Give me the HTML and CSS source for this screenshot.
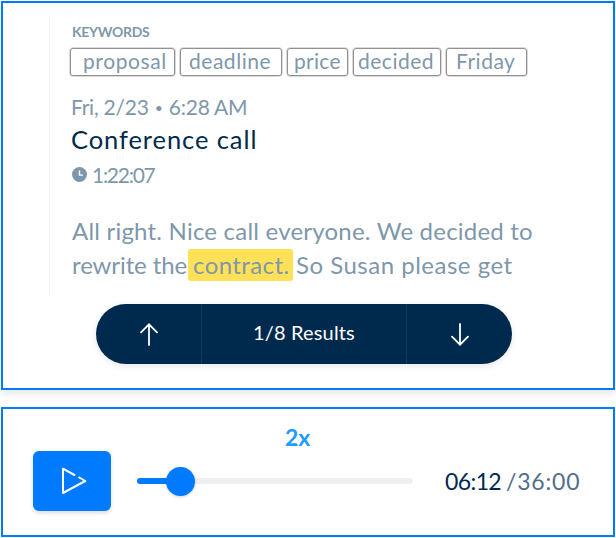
FILE: index.html
```
<!DOCTYPE html>
<html lang="en">
<head>
<meta charset="utf-8">
<title>Conference call</title>
<link rel="stylesheet" href="styles.css">
</head>
<body>
<main class="page">
  <section class="card transcript">
    <div class="entry">
      <h2 class="label">KEYWORDS</h2>
      <div class="tags">
        <span class="tag proposal">proposal</span>
        <span class="tag deadline">deadline</span>
        <span class="tag price">price</span>
        <span class="tag decided">decided</span>
        <span class="tag friday">Friday</span>
      </div>
      <p class="date">Fri, 2/23 <span class="dot">•</span> 6:28 AM</p>
      <h1 class="title">Conference call</h1>
      <p class="duration">
        <svg class="clock" viewBox="0 0 15 15"><circle cx="7.5" cy="7.5" r="7.5" fill="#7f97ab"/><path d="M7.5 3.5v4.6h3.4" fill="none" stroke="#fff" stroke-width="1.4"/></svg>
        <span>1:22:07</span>
      </p>
      <div class="speech">
        <p class="line first">All right. Nice call everyone. We decided to</p>
        <p class="line"><span class="before">rewrite the</span><mark class="hit">contract.</mark><span class="after">So Susan please get</span></p>
      </div>
    </div>
    <nav class="results">
      <button class="step" aria-label="Previous"><svg class="arrow" viewBox="0 0 18 23"><path d="M9 22V1.5M1 9.3L9 1.3L17 9.3"/></svg></button>
      <span class="count">1/8 Results</span>
      <button class="step" aria-label="Next"><svg class="arrow" viewBox="0 0 18 23"><path d="M9 1V21.5M1 13.7L9 21.7L17 13.7"/></svg></button>
    </nav>
  </section>
  <section class="card player">
    <div class="speed">2x</div>
    <div class="controls">
      <button class="play" aria-label="Play"><svg class="play-icon" viewBox="0 0 26 28"><path d="M13.4 8L2 1.7V26L24.3 14L18.2 10.5"/></svg></button>
      <div class="track"><div class="played"></div><div class="knob"></div></div>
      <div class="time"><span class="now">06:12</span><span class="total">/36:00</span></div>
    </div>
  </section>
</main>
</body>
</html>
```
FILE: styles.css
```
* { box-sizing: border-box; }
body { margin: 0; background: #fff; font-family: Lato, "Liberation Sans", sans-serif; color: #7f97ab; }
h1, h2, p { margin: 0; font-weight: 400; }
button { border: 0; padding: 0; background: none; display: flex; align-items: center; justify-content: center; }
span, mark, p, h1, h2 { white-space: nowrap; }

.page { width: 616px; height: 538px; padding: 1px; display: flex; flex-direction: column; gap: 17px; overflow: hidden; }
.card { border: 2px solid #007aff; background: #fff; }

.transcript { height: 389px; padding: 14px 0 0 46px; box-shadow: 0 4px 7px rgba(20, 30, 50, .1); }
.entry { height: 278px; border-left: 1px solid #f2f3f4; padding: 6px 0 0 20px; }
.label { font-size: 14px; line-height: 18px; font-weight: 700; letter-spacing: -.3px; margin-left: 2px; }
.tags { display: flex; margin-top: 7px; height: 28px; gap: 5px; font-size: 21px; }
.tag { height: 28px; border: 1px solid #929292; box-shadow: 0 0 0 .5px #b5b5b5; border-radius: 3px; line-height: 24px; }
.proposal { width: 105px; padding-left: 12px; letter-spacing: .6px; }
.deadline { width: 102px; padding-left: 8px; letter-spacing: .53px; }
.price { width: 61px; padding-left: 6px; letter-spacing: .3px; }
.decided { width: 88px; padding-left: 4px; letter-spacing: .5px; }
.friday { width: 81px; padding-left: 9px; letter-spacing: .5px; }
.date { margin: 18px 0 0 1px; font-size: 21px; line-height: 26px; letter-spacing: -.25px; }
.dot { display: inline-block; width: 10px; font-size: 14px; line-height: 20px; text-align: center; vertical-align: 2px; }
.title { margin: 3px 0 0 1px; font-size: 25.5px; line-height: 32px; letter-spacing: .92px; color: #002a4d; }
.duration { display: flex; align-items: center; gap: 5px; margin: 6px 0 0 2px; height: 26px; font-size: 21px; letter-spacing: -1.28px; }
.clock { width: 15px; height: 15px; }
.speech { margin: 27px 0 0 2px; font-size: 24px; }
.line { display: flex; align-items: center; height: 34px; line-height: 34px; }
.first { letter-spacing: .21px; }
.before { width: 116px; letter-spacing: -.1px; }
.hit { width: 105px; height: 32px; padding-left: 5px; line-height: 32px; border-radius: 3px; background: #ffe157; color: inherit; letter-spacing: .41px; }
.after { margin-left: 3px; letter-spacing: .5px; }

.results { display: grid; grid-template-columns: 105px 1fr 105px; width: 416px; height: 60px; margin: 9px 0 0 47px; border-radius: 30px; background: #002a4d; box-shadow: 0 2px 6px rgba(0, 20, 50, .1); color: #fff; }
.count { border: solid #0d3c5e; border-width: 0 1px; font-size: 20px; line-height: 57px; letter-spacing: .15px; text-align: center; }
.arrow { width: 18px; height: 23px; fill: none; stroke: #fff; stroke-width: 1.8; stroke-linecap: round; }

.player { height: 130px; padding: 15px 0 0 29.5px; }
.speed { margin-left: 252.5px; height: 27px; line-height: 26px; font-size: 23px; font-weight: 700; color: #219bff; }
.controls { display: flex; align-items: center; height: 60px; }
.play { width: 78.5px; height: 60px; border-radius: 6px; background: #007aff; box-shadow: 0 2px 4px rgba(0, 20, 50, .15); }
.play-icon { width: 26px; height: 28px; margin-left: 5px; fill: none; stroke: #fff; stroke-width: 2; stroke-linecap: round; stroke-linejoin: round; }
.track { display: flex; align-items: center; width: 276.5px; height: 6px; margin-left: 25.5px; border-radius: 3px; background: #eeeff1; }
.played { width: 32px; height: 6px; border-radius: 3px 0 0 3px; background: #007aff; }
.knob { width: 29px; height: 29px; margin-left: -3px; border-radius: 50%; background: #007aff; box-shadow: 0 1px 3px rgba(0, 20, 50, .2); flex: none; }
.time { display: flex; margin-left: 32px; font-size: 23px; line-height: 30px; }
.now { width: 61px; color: #002a4d; letter-spacing: -.6px; }
.total { color: #516f89; letter-spacing: .8px; }
```
